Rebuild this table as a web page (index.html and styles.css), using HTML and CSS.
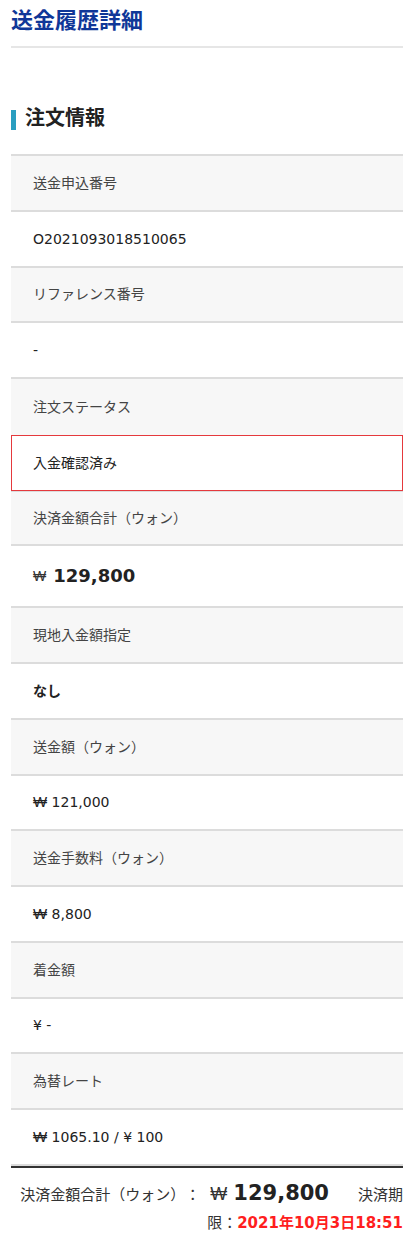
FILE: index.html
```html
<!DOCTYPE html>
<html lang="ja">
<head>
<meta charset="utf-8">
<title>送金履歴詳細</title>
<link rel="stylesheet" href="styles.css">
</head>
<body>
<div class="page">
  <h1 class="page-title">送金履歴詳細</h1>

  <h2 class="section-title">注文情報</h2>

  <div class="detail">
    <div class="row row--label">送金申込番号</div>
    <div class="row">O2021093018510065</div>
    <div class="row row--label">リファレンス番号</div>
    <div class="row">-</div>
    <div class="row row--label row--before-status">注文ステータス</div>
    <div class="row row--status">入金確認済み</div>
    <div class="row row--label row--after-status">決済金額合計（ウォン）</div>
    <div class="row row--amount"><span class="won cur-sm">₩</span><span class="amount">129,800</span></div>
    <div class="row row--label">現地入金額指定</div>
    <div class="row row--bold">なし</div>
    <div class="row row--label">送金額（ウォン）</div>
    <div class="row"><span class="won">₩</span>&nbsp;121,000</div>
    <div class="row row--label">送金手数料（ウォン）</div>
    <div class="row"><span class="won">₩</span>&nbsp;8,800</div>
    <div class="row row--label">着金額</div>
    <div class="row">¥ -</div>
    <div class="row row--label">為替レート</div>
    <div class="row"><span class="won">₩</span>&nbsp;1065.10 / ¥ 100</div>
  </div>

  <p class="summary">決済金額合計（ウォン）：<span class="won summary-cur">₩</span><span class="summary-amount">129,800</span><span class="summary-due">決済期限：<span class="due-date">2021年10月3日18:51</span></span></p>
</div>
</body>
</html>
```

FILE: styles.css
```css
* {
  box-sizing: border-box;
}

html, body {
  margin: 0;
  padding: 0;
  background: #ffffff;
}

body {
  font-family: "DejaVu Sans", "Noto Sans CJK JP", sans-serif;
  color: #222222;
  text-spacing-trim: space-all;
}

.page {
  padding: 0 11px;
}

.page-title {
  margin: 0;
  padding: 6px 0 10px;
  font-size: 22px;
  line-height: 30px;
  font-weight: bold;
  color: #0f3798;
  border-bottom: 2px solid #e6e6e6;
}

.section-title {
  display: flex;
  align-items: center;
  gap: 9px;
  margin: 57px 0 24px;
  font-size: 20px;
  line-height: 24px;
  font-weight: bold;
  color: #222222;
}

.section-title::before {
  content: "";
  width: 5px;
  height: 20px;
  margin-top: 5px;
  background: #2a9ec0;
  flex: none;
}

.detail {
  border-top: 2px solid #dcdcdc;
}

.row {
  display: flex;
  align-items: center;
  height: 55.76px;
  padding: 0 22px;
  font-size: 14px;
  line-height: 20px;
  color: #222222;
  background: #ffffff;
  border-bottom: 2px solid #dcdcdc;
  white-space: pre;
}

.row--label {
  background: #f7f7f7;
  color: #444444;
}

.row--before-status {
  border-bottom: 0;
}

.row--status {
  border: 1px solid #e5393d;
  padding: 0 21px;
}

.row--after-status {
  border-top: 1px solid #dcdcdc;
}

.row--bold {
  font-weight: bold;
}

.row--amount {
  height: 62px;
  gap: 7px;
}

.won {
  font-family: "Liberation Sans", "DejaVu Sans", sans-serif;
  font-size: 15px;
}

.cur-sm {
  font-size: 14px;
  color: #333333;
}

.amount {
  font-size: 18px;
  font-weight: bold;
  color: #222222;
}

.summary {
  margin: 0;
  padding: 12px 0 0;
  border-top: 2px solid #333333;
  text-align: right;
  font-size: 15px;
  line-height: 28px;
  color: #333333;
}

.summary-cur {
  font-size: 18px;
  margin: 0 6px 0 10px;
}

.summary-amount {
  font-size: 21px;
  font-weight: bold;
  line-height: 20px;
  color: #222222;
}

.summary-due {
  margin-left: 29px;
}

.due-date {
  color: #ff1e1e;
  font-weight: bold;
}
```
